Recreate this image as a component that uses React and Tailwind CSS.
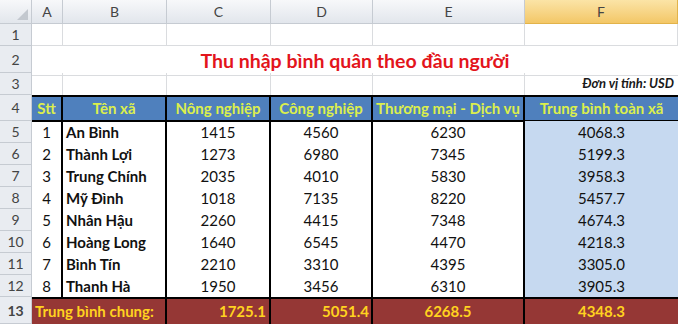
const rows = [
  ['1', 'An Bình', '1415', '4560', '6230', '4068.3'],
  ['2', 'Thành Lợi', '1273', '6980', '7345', '5199.3'],
  ['3', 'Trung Chính', '2035', '4010', '5830', '3958.3'],
  ['4', 'Mỹ Đình', '1018', '7135', '8220', '5457.7'],
  ['5', 'Nhân Hậu', '2260', '4415', '7348', '4674.3'],
  ['6', 'Hoàng Long', '1640', '6545', '4470', '4218.3'],
  ['7', 'Bình Tín', '2210', '3310', '4395', '3305.0'],
  ['8', 'Thanh Hà', '1950', '3456', '6310', '3905.3'],
];

const cols = 'grid grid-cols-[32px_31px_104px_104px_102px_152px_153px]';

function RowNum({ n, h }) {
  return (
    <div
      className={`${h} flex items-center justify-center border-r border-b border-[#c6cbd2] bg-[#e9ecf1] text-[14px] text-[#444]`}
    >
      {n}
    </div>
  );
}

function ColHead({ label, active }) {
  return (
    <div
      className={`flex items-center justify-center border-r border-b text-[14px] text-[#444] ${
        active
          ? 'border-[#e2b34a] bg-gradient-to-b from-[#fbe4a6] to-[#f3c766]'
          : 'border-[#c6cbd2] bg-gradient-to-b from-[#f7f8fa] to-[#e2e6ec]'
      }`}
    >
      {label}
    </div>
  );
}

export default function App() {
  return (
    <div className="w-[678px] h-[324px] overflow-hidden bg-white font-['Lato',sans-serif]">
      {/* column letters */}
      <div className={`${cols} h-[24px]`}>
        <div className="relative border-r border-b border-[#c6cbd2] bg-gradient-to-b from-[#f7f8fa] to-[#e2e6ec]">
          <svg className="absolute right-[3px] bottom-[3px]" width="11" height="11" viewBox="0 0 11 11">
            <polygon points="11,0 11,11 0,11" fill="#c3c8cf" />
          </svg>
        </div>
        <ColHead label="A" />
        <ColHead label="B" />
        <ColHead label="C" />
        <ColHead label="D" />
        <ColHead label="E" />
        <ColHead label="F" active />
      </div>

      {/* row 1 */}
      <div className={`${cols} h-[22px]`}>
        <RowNum n="1" h="h-[22px]" />
        {[0, 1, 2, 3, 4, 5].map((i) => (
          <div key={i} className="border-r border-b border-[#dadcdf]" />
        ))}
      </div>

      {/* row 2 - title */}
      <div className={`${cols} h-[27px]`}>
        <RowNum n="2" h="h-[27px]" />
        <div className="col-span-6 flex items-center justify-center border-b border-[#dadcdf] text-[19.5px] font-bold text-[#e3151c]">
          Thu nhập bình quân theo đầu người
        </div>
      </div>

      {/* row 3 - unit */}
      <div className={`${cols} h-[22px]`}>
        <RowNum n="3" h="h-[22px]" />
        {[0, 1, 2, 3, 4].map((i) => (
          <div key={i} className="border-r border-[#dadcdf]" />
        ))}
        <div className="flex items-end justify-end pr-[4px] pb-[2px] text-[13px] font-bold italic text-[#1a1a1a]">
          Đơn vị tính: USD
        </div>
      </div>

      {/* row 4 - table header */}
      <div className={`${cols} h-[26px]`}>
        <RowNum n="4" h="h-[26px]" />
        {['Stt', 'Tên xã', 'Nông nghiệp', 'Công nghiệp', 'Thương mại - Dịch vụ', 'Trung bình toàn xã'].map((t, i) => (
          <div
            key={t}
            className={`flex items-center justify-center whitespace-nowrap border-y-2 border-black bg-[#4f80bd] text-[15px] font-bold text-[#dcef4c] ${
              i < 5 ? 'border-r-2' : ''
            }`}
          >
            {t}
          </div>
        ))}
      </div>

      {/* data rows */}
      {rows.map((r) => (
        <div key={r[0]} className={`${cols} h-[22px] text-[15px] text-[#111]`}>
          <RowNum n={String(Number(r[0]) + 4)} h="h-[22px]" />
          <div className="flex items-center justify-center border-r-2 border-black">{r[0]}</div>
          <div className="flex items-center pl-[3px] border-r-2 border-black font-bold">{r[1]}</div>
          <div className="flex items-center justify-center border-r-2 border-black">{r[2]}</div>
          <div className="flex items-center justify-center border-r-2 border-black">{r[3]}</div>
          <div className="flex items-center justify-center border-r-2 border-black">{r[4]}</div>
          <div className="flex items-center justify-center bg-[#c6d9f0]">{r[5]}</div>
        </div>
      ))}

      {/* row 13 - totals */}
      <div className={`${cols} h-[27px] text-[15px] font-bold text-[#ffd21f]`}>
        <RowNum n="13" h="h-[27px]" />
        <div className="col-span-2 flex items-center pl-[3px] border-t-2 border-r-2 border-black bg-[#953735]">
          Trung bình chung:
        </div>
        <div className="flex items-center justify-end pr-[3px] border-t-2 border-r-2 border-black bg-[#953735]">1725.1</div>
        <div className="flex items-center justify-end pr-[2px] border-t-2 border-r-2 border-black bg-[#953735]">5051.4</div>
        <div className="flex items-center justify-center border-t-2 border-r-2 border-black bg-[#953735]">6268.5</div>
        <div className="flex items-center justify-center border-t-2 border-black bg-[#953735]">4348.3</div>
      </div>
    </div>
  );
}
